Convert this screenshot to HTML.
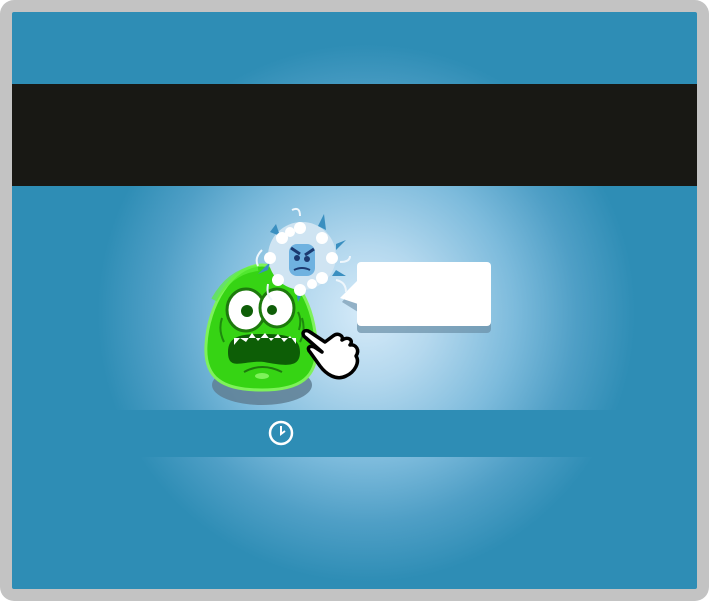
<!DOCTYPE html>
<html><head><meta charset="utf-8"><style>
html,body{margin:0;padding:0;width:709px;height:601px;overflow:hidden;background:#fff}
.frame{position:absolute;left:0;top:0;width:709px;height:601px;background:#c3c3c3;border-radius:14px}
.inner{position:absolute;left:12px;top:12px;width:685px;height:577px;background:#2e8db5;overflow:hidden;border-radius:2px}
.glow{position:absolute;left:63px;top:10px;width:560px;height:560px;
background:radial-gradient(closest-side at 52% 52%,#d6ebf9 0%,#b4d8ee 25%,#7dbbdc 55%,#4f9fc6 78%,rgba(46,141,181,0) 100%)}
.black{position:absolute;left:0;top:72px;width:685px;height:102px;background:#181814}
.band{position:absolute;left:0;top:398px;width:685px;height:47px;background:#2e8db5}
</style></head><body>
<div class="frame"></div>
<div class="inner">
<div class="glow"></div>
<div class="black"></div>
<div class="band"></div>
</div>
<svg width="709" height="601" style="position:absolute;left:0;top:0">
<!-- bubble -->
<rect x="357" y="269" width="134" height="64" rx="4" fill="#6a8ea6" opacity="0.7"/>
<path d="M358 282 L342 302 L358 312 Z" fill="#6a8ea6" opacity="0.6"/>
<path d="M358 280 L340 298 L358 304 Z" fill="#fff"/>
<rect x="357" y="262" width="134" height="64" rx="4" fill="#fff"/>
<!-- blob shadow -->
<ellipse cx="262" cy="385" rx="50" ry="20" fill="#5f7f94" opacity="0.85"/>
<!-- green blob -->
<path d="M262 265 C292 265 312 300 316 340 C320 378 300 390 262 390 C222 390 204 378 206 345 C208 305 232 265 262 265 Z" fill="#36d414" stroke="#7ef25a" stroke-width="3"/>
<path d="M214 300 C225 280 240 270 258 268" stroke="#5cf03a" stroke-width="6" fill="none" opacity="0.7"/>
<!-- cheek lines -->
<path d="M222 318 Q218 330 224 342 M302 318 Q306 330 300 342 M298 312 Q302 320 299 330" stroke="#1d8a0d" stroke-width="2" fill="none"/>
<!-- eyes -->
<ellipse cx="246" cy="310" rx="19" ry="21" fill="#fff" stroke="#1d7a0d" stroke-width="3"/>
<ellipse cx="277" cy="308" rx="17" ry="19" fill="#fff" stroke="#1d7a0d" stroke-width="3"/>
<circle cx="247" cy="311" r="6" fill="#0f5e08"/>
<circle cx="272" cy="310" r="5" fill="#0f5e08"/>
<!-- mouth -->
<path d="M228 352 C228 334 245 334 264 334 C284 334 300 336 300 352 C300 368 286 366 264 362 C244 360 228 372 228 352 Z" fill="#0d5e06"/>
<path d="M234 345 L240 338 L246 342 L252 333 L258 341 L265 333 L271 341 L278 334 L284 342 L290 336 L296 344 L296 338 L234 338 Z" fill="#fff"/>
<path d="M244 372 Q262 362 282 372" stroke="#1d7a0d" stroke-width="2" fill="none"/>
<ellipse cx="262" cy="376" rx="7" ry="3" fill="#7ef25a"/>
<!-- virus -->
<g>
<circle cx="302" cy="256" r="34" fill="#cfe4f2"/>
<g fill="#3a8fc0">
<path d="M270 232 L276 224 L280 236 Z"/><path d="M318 226 L324 214 L326 230 Z"/><path d="M336 244 L346 240 L336 250 Z"/>
<path d="M336 270 L346 276 L332 276 Z"/><path d="M296 290 L298 302 L304 290 Z"/><path d="M268 270 L258 274 L270 262 Z"/>
</g>
<g fill="#fff">
<circle cx="282" cy="238" r="6"/><circle cx="300" cy="228" r="6"/><circle cx="322" cy="238" r="6"/>
<circle cx="332" cy="258" r="6"/><circle cx="322" cy="278" r="6"/><circle cx="300" cy="290" r="6"/>
<circle cx="278" cy="280" r="6"/><circle cx="270" cy="258" r="6"/><circle cx="312" cy="284" r="5"/><circle cx="290" cy="232" r="5"/>
</g>
<path d="M292 210 Q300 206 300 216 M336 280 Q346 282 346 292 M262 250 Q254 258 258 266 M340 262 Q350 262 350 256 M268 284 Q266 296 272 300" stroke="#eef6fc" stroke-width="2" fill="none"/>
<rect x="289" y="244" width="26" height="32" rx="8" fill="#6fb2e0"/>
<path d="M291 248 L300 254 M314 249 L305 255" stroke="#1c3a70" stroke-width="3"/>
<circle cx="297" cy="258" r="3" fill="#1c3a70"/><circle cx="307" cy="259" r="3" fill="#1c3a70"/>
<path d="M294 270 Q302 266 310 270" stroke="#1c3a70" stroke-width="2" fill="none"/>
</g>
<!-- hand -->
<path d="M306 338 C300 334 304 328 310 332 L325 342 L333 336 C338 332 344 336 342 340 C348 336 354 340 350 345 C356 344 360 350 356 356 C360 362 355 372 346 376 C336 381 326 374 320 366 L310 352 C306 348 310 344 316 348 L322 352 Z" fill="#fff" stroke="#000" stroke-width="3.5" stroke-linejoin="round"/>
<!-- clock -->
<circle cx="281" cy="433" r="11" fill="none" stroke="#fff" stroke-width="2.5"/>
<path d="M281 426 L281 434 L285 431" stroke="#fff" stroke-width="2" fill="none"/>
</svg>
</body></html>
